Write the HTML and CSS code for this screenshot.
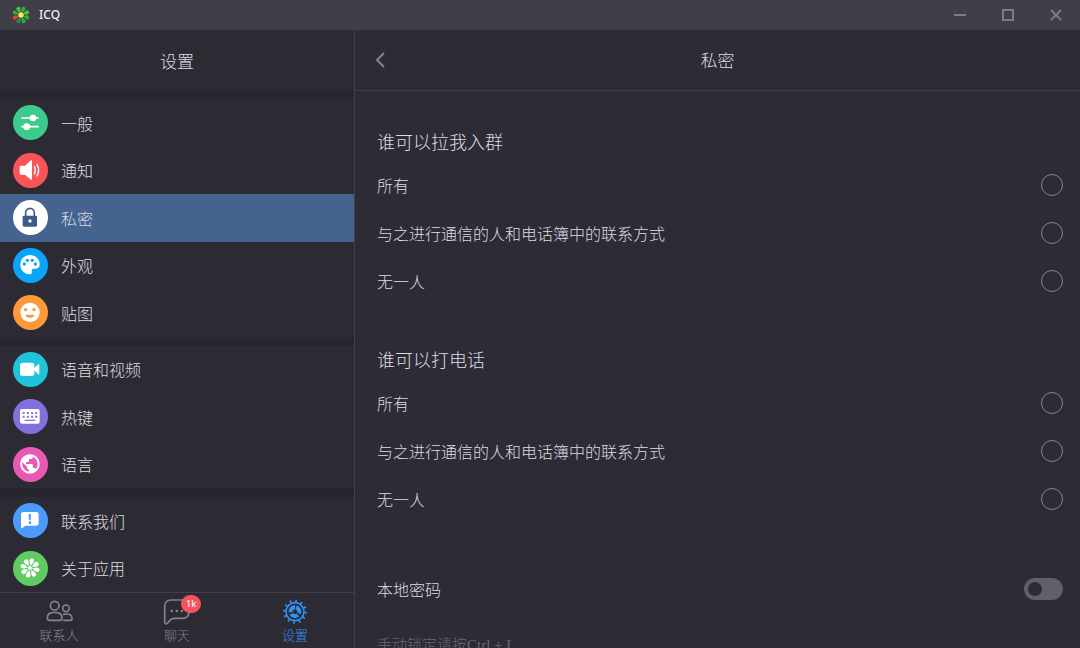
FILE: index.html
```html
<!DOCTYPE html>
<html lang="zh-CN">
<head>
    <meta charset="UTF-8">
    <meta name="viewport" content="width=device-width, initial-scale=1.0">
    <title>ICQ</title>
    <link rel="stylesheet" href="styles.css">
</head>
<body>
    <header class="titlebar">
        <svg class="logo" viewBox="-30 -30 60 60">
            <defs>
                <path id="petal" d="M0 -7 C-2 -11 -9 -19 -6 -26 C-4 -30 4 -30 6 -26 C9 -19 2 -11 0 -7z"/>
            </defs>
            <g fill="#35a845">
                <use href="#petal" transform="rotate(22)"/>
                <use href="#petal" transform="rotate(112)"/>
                <use href="#petal" transform="rotate(202)" fill="#1f8f45"/>
                <use href="#petal" transform="rotate(292)"/>
                <use href="#petal" transform="rotate(67)" fill="#4fc04a"/>
                <use href="#petal" transform="rotate(157)"/>
                <use href="#petal" transform="rotate(337)" fill="#4fc04a"/>
                <use href="#petal" transform="rotate(247)" fill="#e0403a"/>
            </g>
            <circle r="9" fill="#f4ee3a"/>
        </svg>
        <span class="app-name">ICQ</span>
        <div class="window-buttons">
            <button aria-label="最小化"><svg viewBox="0 0 12 12"><path d="M0 6h12"/></svg></button>
            <button aria-label="最大化"><svg viewBox="0 0 12 12"><path d="M1 1h10v10H1z"/></svg></button>
            <button aria-label="关闭"><svg viewBox="0 0 12 12"><path d="M1 1l10 10M11 1L1 11"/></svg></button>
        </div>
    </header>

    <div class="window">
        <aside class="sidebar">
            <h1 class="sidebar-title">设置</h1>

            <nav class="menu">
                <a href="#" class="menu-item">
                    <svg class="icon green" viewBox="0 0 105 105">
                        <path d="M27 39h48M27 65h48" stroke="#fff" stroke-width="5" stroke-linecap="round"/>
                        <circle cx="60" cy="39" r="10" fill="#fff"/>
                        <circle cx="41" cy="65" r="10" fill="#fff"/>
                    </svg>
                    一般
                </a>
                <a href="#" class="menu-item">
                    <svg class="icon red" viewBox="0 0 105 105">
                        <path d="M24 38h12L54 22q3-2 3 2v54q0 4-3 2L36 65H24q-4 0-4-4V42q0-4 4-4z" fill="#fff"/>
                        <path d="M64 41q6 11 0 22M72 35q10 17 0 34" fill="none" stroke="#fff" stroke-width="4" stroke-linecap="round"/>
                    </svg>
                    通知
                </a>
                <a href="#" class="menu-item active">
                    <svg class="icon white" viewBox="0 0 105 105">
                        <path d="M38 50V38a13 13 0 0 1 26 0v12" fill="none" stroke="#3d5b8a" stroke-width="5"/>
                        <rect x="29" y="47" width="43" height="33" rx="4" fill="#3d5b8a"/>
                        <circle cx="51" cy="63" r="5" fill="#fff"/>
                    </svg>
                    私密
                </a>
                <a href="#" class="menu-item">
                    <svg class="icon blue" viewBox="0 0 105 105">
                        <path d="M51 21C34 21 22 34 22 50c0 17 13 29 30 29q4 0 4-4v-7q0-6 6-6h6q12 0 12-13C80 33 67 21 51 21z" fill="#fff"/>
                        <g fill="#0aa5fb"><circle cx="34" cy="48" r="5"/><circle cx="43" cy="37" r="5"/><circle cx="58" cy="37" r="5"/><circle cx="67" cy="48" r="5"/></g>
                    </svg>
                    外观
                </a>
                <a href="#" class="menu-item">
                    <svg class="icon orange" viewBox="0 0 105 105">
                        <circle cx="51" cy="52" r="29" fill="#fff"/>
                        <g fill="#ff9838"><circle cx="38" cy="44" r="5"/><circle cx="63" cy="44" r="5"/><path d="M37 59h28q-2 9-14 9t-14-9z"/></g>
                    </svg>
                    贴图
                </a>
                <hr class="divider">
                <a href="#" class="menu-item">
                    <svg class="icon cyan" viewBox="0 0 105 105">
                        <rect x="21" y="32" width="43" height="40" rx="8" fill="#fff"/>
                        <path d="M62 49l14-12q3-2 3 2v26q0 4-3 2L62 55z" fill="#fff"/>
                    </svg>
                    语音和视频
                </a>
                <a href="#" class="menu-item">
                    <svg class="icon violet" viewBox="0 0 105 105">
                        <rect x="21" y="30" width="59" height="44" rx="6" fill="#fff"/>
                        <path d="M29 42h44M29 53h44" stroke="#8270dc" stroke-width="6" stroke-dasharray="6 6.600"/>
                        <path d="M35 64h32" stroke="#8270dc" stroke-width="4"/>
                    </svg>
                    热键
                </a>
                <a href="#" class="menu-item">
                    <svg class="icon pink" viewBox="0 0 105 105">
                        <path transform="translate(16 16) scale(2.9)" fill="#fff" d="M12 2C6.480 2 2 6.480 2 12s4.480 10 10 10 10-4.480 10-10S17.520 2 12 2zm-1 17.930c-3.950-.49-7-3.850-7-7.930 0-.62.08-1.210.21-1.790L9 15v1c0 1.100.9 2 2 2v1.930zm6.900-2.540c-.26-.81-1-1.390-1.900-1.390h-1v-3c0-.55-.45-1-1-1H8v-2h2c.55 0 1-.45 1-1V7h2c1.100 0 2-.9 2-2v-.41c2.930 1.190 5 4.060 5 7.410 0 2.080-.8 3.970-2.100 5.390z"/>
                    </svg>
                    语言
                </a>
                <hr class="divider">
                <a href="#" class="menu-item">
                    <svg class="icon sky" viewBox="0 0 105 105">
                        <path d="M31 27h39q7 0 7 7v27q0 7-7 7H37l-9 7q-4 2-4-2V34q0-7 7-7z" fill="#fff"/>
                        <path d="M47 33h7l-1 19h-5z" fill="#4a9bfb"/>
                        <circle cx="51" cy="59" r="4" fill="#4a9bfb"/>
                    </svg>
                    联系我们
                </a>
                <a href="#" class="menu-item">
                    <svg class="icon lime" viewBox="0 0 105 105">
                        <g transform="translate(51 51)" fill="#fff">
                            <use href="#petal" transform="rotate(14)"/>
                            <use href="#petal" transform="rotate(59)"/>
                            <use href="#petal" transform="rotate(104)"/>
                            <use href="#petal" transform="rotate(149)"/>
                            <use href="#petal" transform="rotate(194)"/>
                            <use href="#petal" transform="rotate(239)"/>
                            <use href="#petal" transform="rotate(284)"/>
                            <use href="#petal" transform="rotate(329)"/>
                            <circle r="6"/>
                        </g>
                    </svg>
                    关于应用
                </a>
            </nav>

            <nav class="tabs">
                <a href="#" class="tab">
                    <svg viewBox="0 0 84 78">
                        <circle cx="29" cy="20" r="13"/>
                        <path d="M14 64q-7 0-7-8 0-16 22-16t22 16q0 8-7 8z"/>
                        <circle cx="63" cy="28" r="10"/>
                        <path d="M56 46q25-5 25 13 0 5-5 5H56"/>
                    </svg>
                    联系人
                </a>
                <a href="#" class="tab">
                    <span class="tab-icon">
                        <svg viewBox="0 0 84 78">
                            <path d="M24 3h34q20 0 20 20v15q0 20-20 20H33q-8 0-13 7l-7 8q-7 5-8-4V23Q5 3 24 3z"/>
                            <path d="M26 36h1M41 36h1M56 36h1" stroke-width="7"/>
                        </svg>
                        <span class="badge">1k</span>
                    </span>
                    聊天
                </a>
                <a href="#" class="tab active">
                    <svg viewBox="0 0 84 78">
                        <circle cx="42" cy="38" r="27"/>
                        <circle cx="42" cy="38" r="32" stroke-width="8" stroke-dasharray="5 11.755" stroke-linecap="butt"/>
                        <circle cx="42" cy="38" r="13" stroke-width="12" stroke-dasharray="22 5.227" stroke-linecap="butt" transform="rotate(-75 42 38)"/>
                    </svg>
                    设置
                </a>
            </nav>
        </aside>

        <main class="page">
            <div class="page-header">
                <button class="back" aria-label="返回"><svg viewBox="0 0 10 16"><path d="M9 1L2 8l7 7"/></svg></button>
                <h2>私密</h2>
            </div>

            <form class="content">
                <fieldset class="section">
                    <legend>谁可以拉我入群</legend>
                    <label class="row">所有<input type="radio" class="radio" name="groups"></label>
                    <label class="row">与之进行通信的人和电话簿中的联系方式<input type="radio" class="radio" name="groups"></label>
                    <label class="row">无一人<input type="radio" class="radio" name="groups"></label>
                </fieldset>

                <fieldset class="section">
                    <legend>谁可以打电话</legend>
                    <label class="row">所有<input type="radio" class="radio" name="calls"></label>
                    <label class="row">与之进行通信的人和电话簿中的联系方式<input type="radio" class="radio" name="calls"></label>
                    <label class="row">无一人<input type="radio" class="radio" name="calls"></label>
                </fieldset>

                <label class="row">本地密码<input type="checkbox" class="switch"></label>
                <p class="hint">手动锁定请按Ctrl + L</p>
            </form>
        </main>
    </div>
</body>
</html>
```
FILE: styles.css
```css
* {
    box-sizing: border-box;
}

body {
    margin: 0;
    height: 100vh;
    display: flex;
    flex-direction: column;
    overflow: hidden;
    background-color: #2d2b36;
    color: #dddce0;
    font-family: "Noto Sans CJK SC", sans-serif;
    font-size: 16px;
    font-weight: 300;
    line-height: 24px;
}

h1, h2 {
    margin: 0;
    font-size: 17px;
    font-weight: 300;
}

a {
    color: inherit;
    text-decoration: none;
}

button {
    padding: 0;
    border: none;
    background: none;
    cursor: pointer;
}

/* title bar */
.titlebar {
    display: flex;
    align-items: center;
    flex-shrink: 0;
    height: 30px;
    padding-left: 12px;
    background-color: #3f3e49;
}

.logo {
    width: 18px;
    height: 18px;
    margin-right: 9px;
}

.app-name {
    color: #f0f0f3;
    font-family: "Noto Sans", sans-serif;
    font-size: 12px;
    font-weight: 500;
}

.window-buttons {
    display: flex;
    height: 100%;
    margin-left: auto;
}

.window-buttons button {
    display: flex;
    align-items: center;
    justify-content: center;
    width: 48px;
}

.window-buttons svg {
    width: 12px;
    height: 12px;
    fill: none;
    stroke: #7d7b86;
    stroke-width: 2;
}

.window {
    display: flex;
    flex: 1;
    min-height: 0;
}

/* left column */
.sidebar {
    display: flex;
    flex-direction: column;
    flex-shrink: 0;
    width: 355px;
    border-right: 1px solid #403e49;
    background-color: #2c2b34;
}

.sidebar-title {
    display: flex;
    align-items: center;
    justify-content: center;
    height: 61px;
}

.menu {
    display: flex;
    flex-direction: column;
    flex: 1;
    border-top: 8px solid #27252e;
}

.menu-item {
    display: flex;
    align-items: center;
    flex: 1;
    gap: 13px;
    padding-left: 13px;
}

.menu-item.active {
    background-color: #44638f;
}

.divider {
    width: 100%;
    height: 9px;
    margin: 0;
    border: none;
    background-color: #27252e;
}

.icon {
    width: 35px;
    height: 35px;
    border-radius: 50%;
}

.green { background-color: #3ccb8d; }
.red { background-color: #fa5457; }
.white { background-color: #fff; }
.blue { background-color: #0aa5fb; }
.orange { background-color: #ff9838; }
.cyan { background-color: #20c3da; }
.violet { background-color: #8270dc; }
.pink { background-color: #e959b4; }
.sky { background-color: #4a9bfb; }
.lime { background-color: #61ca62; }

.tabs {
    display: flex;
    height: 56px;
    border-top: 1px solid #403e49;
}

.tab {
    display: flex;
    flex: 1;
    flex-direction: column;
    align-items: center;
    padding-top: 6px;
    color: #85838e;
    font-size: 13px;
    line-height: 20px;
}

.tab.active {
    color: #3191f2;
}

.tab svg {
    display: block;
    width: 28px;
    height: 26px;
    fill: none;
    stroke: currentColor;
    stroke-width: 5;
    stroke-linecap: round;
}

.tab-icon {
    position: relative;
}

.badge {
    position: absolute;
    top: -4px;
    left: 18px;
    padding: 0 5px;
    border-radius: 9px;
    background-color: #f4545c;
    color: #fff;
    font-family: "Noto Sans", sans-serif;
    font-size: 9px;
    font-weight: 500;
    line-height: 18px;
}

/* right column */
.page {
    display: flex;
    flex: 1;
    flex-direction: column;
    min-width: 0;
}

.page-header {
    display: grid;
    grid-template-columns: 50px 1fr 50px;
    align-items: center;
    flex-shrink: 0;
    height: 61px;
    border-bottom: 1px solid #403e49;
}

.page-header h2 {
    text-align: center;
}

.back {
    display: flex;
    justify-content: center;
}

.back svg {
    width: 10px;
    height: 16px;
    fill: none;
    stroke: #85838e;
    stroke-width: 2;
}

.content {
    flex: 1;
    padding: 38px 17px 0 22px;
    overflow-y: auto;
    scrollbar-width: none;
}

.section {
    margin: 0 0 42px;
    padding: 0;
    border: none;
}

.section legend {
    padding: 0;
    margin-bottom: 8px;
    font-size: 18px;
}

.row {
    display: flex;
    align-items: center;
    justify-content: space-between;
    height: 48px;
}

.radio {
    appearance: none;
    width: 22px;
    height: 22px;
    margin: 0;
    border: 1px solid #85838e;
    border-radius: 50%;
}

.radio:checked {
    border: 6px solid #3191f2;
}

.switch {
    appearance: none;
    display: flex;
    align-items: center;
    width: 39px;
    height: 22px;
    margin: 0;
    padding: 0 4px;
    border-radius: 11px;
    background-color: #615f6b;
}

.switch::before {
    content: "";
    width: 14px;
    height: 14px;
    border-radius: 50%;
    background-color: #2d2b36;
}

.switch:checked {
    justify-content: flex-end;
    background-color: #3191f2;
}

.hint {
    margin: 20px 0;
    color: #6a6873;
    font-family: "Liberation Serif", "Noto Sans CJK SC", serif;
    font-size: 15px;
}
```
